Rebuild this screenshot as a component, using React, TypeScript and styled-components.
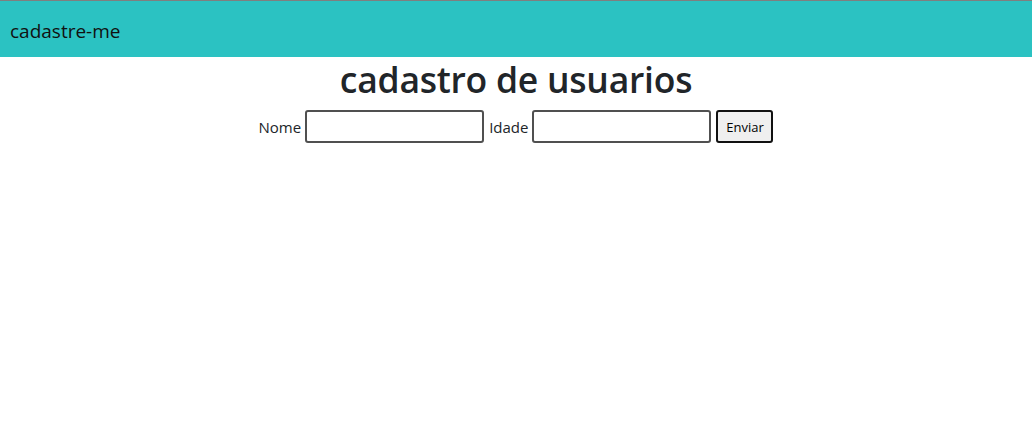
import React from "react";
import styled, { createGlobalStyle } from "styled-components";

const Global = createGlobalStyle`
  html, body { margin: 0; padding: 0; background: #fff; }
  body {
    font-family: "Open Sans", "Noto Sans", sans-serif;
    font-size: 16px;
    color: #212529;
  }
  * { box-sizing: border-box; }
`;

const Nav = styled.nav`
  height: 57px;
  border-top: 1px solid #7f7f7f;
  background: #2bc2c2;
  display: flex;
  align-items: center;
  padding: 3px 10px 0;
`;

const Brand = styled.span`
  font-size: 19px;
  color: #111;
`;

const Title = styled.h1`
  margin: 0 0 8px;
  text-align: center;
  font-size: 35.5px;
  font-weight: 600;
  line-height: 45px;
  letter-spacing: -0.25px;
`;

const Form = styled.form`
  display: flex;
  justify-content: center;
  align-items: center;
  gap: 4px;
  font-size: 15px;
`;

const Label = styled.label``;

const Input = styled.input`
  width: 179px;
  height: 33px;
  border: 2px solid #505050;
  border-radius: 3px;
  background: #fff;
  margin-right: 1px;
`;

const Button = styled.button`
  height: 33px;
  width: 57px;
  border: 2px solid #111;
  border-radius: 3px;
  background: #efefef;
  font-family: "Open Sans", sans-serif;
  font-size: 13px;
  color: #000;
  padding: 0;
`;

export default function App() {
  return (
    <>
      <Global />
      <Nav>
        <Brand>cadastre-me</Brand>
      </Nav>
      <Title>cadastro de usuarios</Title>
      <Form onSubmit={(e) => e.preventDefault()}>
        <Label>Nome</Label>
        <Input type="text" />
        <Label>Idade</Label>
        <Input type="text" />
        <Button type="submit">Enviar</Button>
      </Form>
    </>
  );
}
